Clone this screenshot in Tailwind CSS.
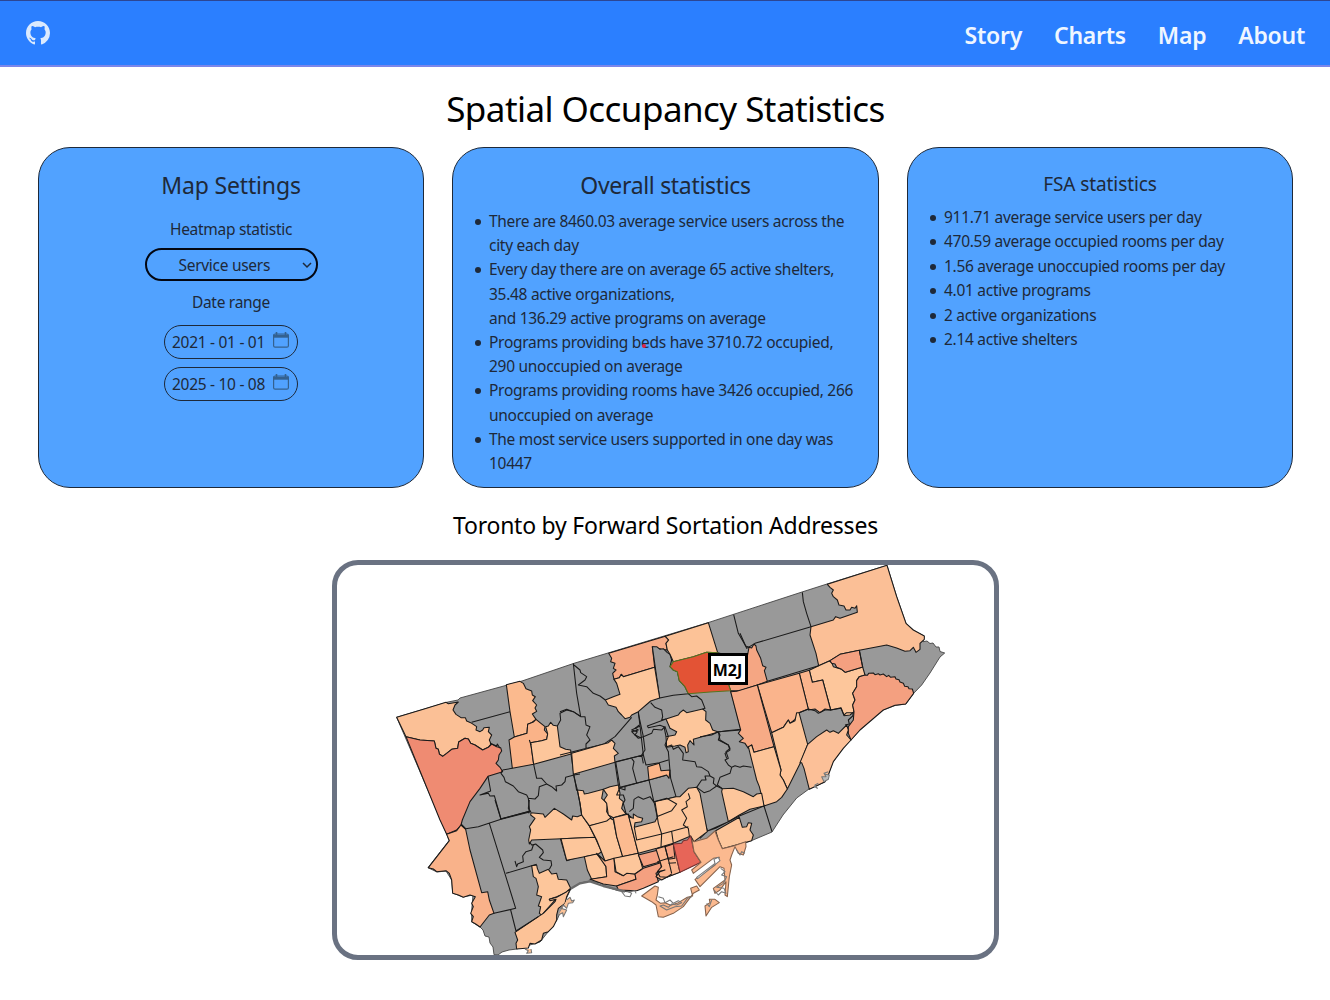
<!DOCTYPE html>
<html lang="en">
<head>
<meta charset="utf-8">
<title>Spatial Occupancy Statistics</title>
<script src="https://cdn.jsdelivr.net/npm/@tailwindcss/browser@4"></script>
</head>
<body class="h-[1000px] overflow-hidden bg-white font-['Noto_Sans',sans-serif] text-black">
<header class="flex h-[67px] items-center justify-between border-t border-b-2 border-t-[#2c4694] border-b-[#7b86ea] bg-[#2b7fff] px-[25px]">
  <svg class="ml-px size-[24px]" viewBox="0 0 16 16" fill="#dbeafe"><path d="M8 0C3.58 0 0 3.58 0 8c0 3.54 2.29 6.53 5.47 7.59.4.07.55-.17.55-.38 0-.19-.01-.82-.01-1.49-2.01.37-2.53-.49-2.69-.94-.09-.23-.48-.94-.82-1.13-.28-.15-.68-.52-.01-.53.63-.01 1.08.58 1.23.82.72 1.21 1.87.87 2.33.66.07-.52.28-.87.51-1.07-1.78-.2-3.64-.89-3.64-3.95 0-.87.31-1.59.82-2.15-.08-.2-.36-1.02.08-2.12 0 0 .67-.21 2.2.82.64-.18 1.32-.27 2-.27s1.36.09 2 .27c1.53-1.04 2.2-.82 2.2-.82.44 1.1.16 1.92.08 2.12.51.56.82 1.27.82 2.15 0 3.07-1.87 3.75-3.65 3.95.29.25.54.73.54 1.48 0 1.07-.01 1.93-.01 2.2 0 .21.15.46.55.38A8.01 8.01 0 0 0 16 8c0-4.42-3.58-8-8-8"/></svg>
  <nav class="flex gap-8 pt-[3px] text-[23px] leading-8 font-semibold tracking-[-0.27px] text-[#eff6ff]">
    <a>Story</a><a>Charts</a><a>Map</a><a>About</a>
  </nav>
</header>
<main>
  <h1 class="mt-[22px] h-10 pl-px text-center text-[35px] leading-10 tracking-[-0.55px]">Spatial Occupancy Statistics</h1>
  <section class="mr-[37px] ml-[38px] mt-[18px] flex h-[341px] justify-between text-[15.5px] leading-[24.3px] tracking-[-0.29px] text-[#1e2939]">
    <div class="flex w-[386px] flex-col items-center rounded-[32px] border border-[#1e2939] bg-[#51a2ff]">
      <h2 class="mt-[21px] text-[23px] leading-8 tracking-[-0.15px]">Map Settings</h2>
      <label class="mt-[16px]">Heatmap statistic</label>
      <div class="mt-[7px] flex h-[33px] w-[173px] items-center rounded-full border-2 border-[#030712] pr-[4px] pl-[32px]">
        <span class="grow">Service users</span>
        <svg class="size-[10px]" viewBox="0 0 10 10" fill="none" stroke="#1e2939" stroke-width="1.5"><path d="M1 3l4 4 4-4"/></svg>
      </div>
      <label class="mt-[9px]">Date range</label>
      <div class="mt-[10px] flex h-[34px] w-[134px] items-center justify-between rounded-full border border-[#1e2939] px-[7px]">
        <span class="pt-0.5">2021 - 01 - 01</span>
        <svg class="mr-px mb-1 size-4" viewBox="0 0 16 16" fill="none" stroke="#34618f"><rect x=".6" y="2" width="14.8" height="13.2" rx="1.5" stroke-width="1.2"/><path d="M.6 4.2h14.8" stroke-width="3"/><path d="M3.5 0v3M12.5 0v3" stroke-width="1.6"/></svg>
      </div>
      <div class="mt-2 flex h-[34px] w-[134px] items-center justify-between rounded-full border border-[#1e2939] px-[7px]">
        <span class="pt-0.5">2025 - 10 - 08</span>
        <svg class="mr-px mb-1 size-4" viewBox="0 0 16 16" fill="none" stroke="#34618f"><rect x=".6" y="2" width="14.8" height="13.2" rx="1.5" stroke-width="1.2"/><path d="M.6 4.2h14.8" stroke-width="3"/><path d="M3.5 0v3M12.5 0v3" stroke-width="1.6"/></svg>
      </div>
    </div>
    <div class="relative w-[427px] rounded-[32px] border border-[#1e2939] bg-[#51a2ff]">
      <h2 class="mt-[21px] text-center text-[23px] leading-8 tracking-[-0.32px]">Overall statistics</h2>
      <ul class="mt-[8px] pl-[36px] leading-[24.2px] whitespace-nowrap *:relative *:before:absolute *:before:top-[10px] *:before:-left-[14px] *:before:size-[6px] *:before:rounded-full *:before:bg-[#1e2939] *:before:content-['']">
        <li>There are 8460.03 average service users across the<br>city each day</li>
        <li>Every day there are on average 65 active shelters,<br>35.48 active organizations,<br>and 136.29 active programs on average</li>
        <li>Programs providing beds have 3710.72 occupied,<br>290 unoccupied on average</li>
        <li>Programs providing rooms have 3426 occupied, 266<br>unoccupied on average</li>
        <li>The most service users supported in one day was<br>10447</li>
      </ul>
      <span class="absolute top-[196px] left-[189px] size-1 rounded-full bg-[#e0254a]"></span>
    </div>
    <div class="w-[386px] rounded-[32px] border border-[#1e2939] bg-[#51a2ff]">
      <h2 class="mt-[22px] text-center text-[19px] leading-7 tracking-[-0.1px]">FSA statistics</h2>
      <ul class="mt-[7px] pl-[36px] leading-[24.4px] whitespace-nowrap *:relative *:before:absolute *:before:top-[10px] *:before:-left-[14px] *:before:size-[6px] *:before:rounded-full *:before:bg-[#1e2939] *:before:content-['']">
        <li>911.71 average service users per day</li>
        <li>470.59 average occupied rooms per day</li>
        <li>1.56 average unoccupied rooms per day</li>
        <li>4.01 active programs</li>
        <li>2 active organizations</li>
        <li>2.14 active shelters</li>
      </ul>
    </div>
  </section>
  <h2 class="mt-[21px] mb-[19px] pl-px text-center text-[23px] leading-8 tracking-[-0.24px]">Toronto by Forward Sortation Addresses</h2>
  <div class="relative mx-auto h-[400px] w-[667px] overflow-hidden rounded-[26px] border-5 border-[#6a7282]">
    <svg class="block h-[390px] w-[657px]" viewBox="337 565 657 390" fill="none" stroke="#1a1a1a" stroke-width="3.2" stroke-linejoin="round">
      <path fill="#999" stroke="#444" stroke-width=".9" d="M396.7 717.3L448 702L458 700L460 698L522 681L574 663.3L708 622.7L802 592L827 584L887 565.3L896.7 596.7L906 623.3L913 630L924 636L923 641.7L927 641L930 643.5L933 643L936 647L939 647L940 651.5L944.7 653L940 657L930 673L921.7 685L913 694L906 704L895 705.5L883 710L873 718L860 730L851 740L843 748L833 762L828 775L825 782L818 785L809 789L796.7 798L783 815L772 832L753 840L745 843L720 846L701 862L680 872L655 882L643 886L630 892L618 890.7L607 887L600 883L590 881L580 883L571 888.5L567 897L557 920L548 932L540 942L530 945L516.7 949L509 950L502 952L498 955L494 954.7L493 947L490 943L489 937L485 936L483 930L480 927L471.7 921.7L471.7 910L473 895L463 897L452.7 893L451.7 880L446 871L437 872L428 867.7L449 840.7L446.7 834Z"/>
      <!-- north-west -->
      <g transform="translate(380 680) scale(.33333)">
        <path fill="#fbc096" d="M50 112L130 88L198 67L205 71L235 66L225 75L219 90L228 103L243 113L256 113L260 123L272 128L290 140L288 150L300 155L308 150L312 143L328 142L325 155L335 165L328 180L333 192L325 202L308 210L285 195L272 190L265 177L255 175L236 186L233 205L215 208L200 220L188 229L178 222L175 208L168 205L163 183L120 180L78 170Z"/>
        <path fill="#ef8b72" d="M78 170L120 180L163 183L168 205L175 208L178 222L188 229L200 220L215 208L233 205L236 186L255 175L265 177L272 190L285 195L308 210L325 202L335 192L350 200L362 203L365 213L357 225L355 240L348 250L360 262L368 275L324 289L300 325L270 365L247 420L243 435L230 450L200 463L180 420Z"/>
        <path fill="#fbba8e" d="M379 14L420 4L430 10L438 26L455 33L457 45L466 50L458 62L470 75L465 84L470 94L457 102L468 118L455 128L443 133L441 160L403 171L390 95Z"/>
        <path fill="#fab388" d="M403 171L441 160L443 133L460 126L468 118L480 128L495 140L493 150L503 162L500 178L485 182L452 188L461 253L397 265L387 180Z"/>
        <path fill="#fdc69b" d="M452 188L485 182L500 178L503 162L497 140L505 138L512 127L520 136L532 138L540 200L557 208L572 210L573 222L461 253Z"/>
        <path d="M390 95L275 127M330 190L350 198L352 192L360 205M397 265L368 270M573 222L600 214M461 253L470 295L485 295L500 312L515 320L530 333L528 318L545 315L555 305L557 292L582 285L600 282M573 222L582 285L590 332M324 289L332 333L300 345L325 340L330 348L343 347L363 417L450 393M368 270L363 280L372 292L376 305L400 318L415 335L440 345L445 355L448 385L446 400M445 355L465 357L475 347L478 320L500 312M532 138L542 120L540 100L560 90L580 95L600 108"/>
      </g>
      <!-- north-centre -->
      <g transform="translate(560 620) scale(.33333)">
        <path fill="#f7ab86" d="M146 100L316 49L326 60L318 70L322 90L305 88L277 80L284 142L190 170L184 163L178 173L162 178L158 160L168 150L160 145L165 130L152 125L155 115Z"/>
        <path fill="#999" d="M277 80L290 80L300 88L310 86L322 98L330 103L335 120L330 140L340 150L352 155L358 182L375 200L385 221L340 226L299 234Z"/>
        <path fill="#fcc297" d="M316 49L445 8L473 98L440 97L400 110L340 125L330 103L322 90L318 70L326 60Z"/>
        <path fill="#fdc69b" d="M162 178L178 173L184 163L190 170L284 142L299 234L272 243L235 275L215 285L210 292L195 296L185 285L175 275L168 262L145 255L136 240L160 230L180 223L170 190Z"/>
        <path fill="#f5a683" d="M473 98L560 120L567 82L575 84L582 72L588 78L590 90L602 115L608 137L618 142L613 152L622 184L592 195L540 212L512 212Z"/>
        <path fill="#e35335" stroke="#55751f" d="M340 125L400 110L440 97L473 98L490 150L512 212L450 216L385 221L375 200L358 182L352 155L340 150L330 140Z"/>
        <path fill="#fdc69b" d="M318 297L355 285L360 278L370 270L380 278L428 267L438 275L437 300L450 310L458 330L475 336L400 358L402 375L390 362L383 375L385 395L378 398L375 382L360 375L345 378L320 382L318 350L345 345L350 335L330 325Z"/>
        <path d="M40 130L50 220L62 290L75 290L78 315L90 320L80 345L90 360L78 372L78 385M42 135L60 150L62 158L80 170L75 180L55 195L80 200L100 220L120 228L136 240M521 -16L535 40L557 78L567 82M0 275L20 268L40 275L62 290M0 405L80 385L130 373L165 350L215 292M385 221L395 230L410 228L425 240L435 265L428 267M475 336L500 332L543 328L512 212M475 336L480 345L475 360L505 375L510 390L495 400L500 415M272 248L285 262L305 270L308 290L305 300L318 297M235 275L240 318L215 330L232 335L225 345L245 355M240 318L250 405M318 297L262 318L265 323L300 316L312 320L318 350"/>
      </g>
      <!-- north-east -->
      <g transform="translate(740 560) scale(.33333)">
        <path fill="#fbbf96" d="M262 73L441 16L470 110L498 190L520 210L553 228L553 238L540 250L540 268L528 277L520 262L510 272L495 274L470 264L440 255L358 271L300 283L270 302L236 317L228 280L210 225L213 200L280 180L287 170L300 175L352 157L350 137L345 145L335 142L330 150L318 150L312 138L297 135L292 120L280 110L275 100L280 90L270 82Z"/>
        <path fill="#fdc69b" d="M208 331L236 317L268 303L275 308L280 320L305 328L316 337L368 321L375 345L358 350L350 362L350 380L338 400L345 420L338 435L342 455L330 465L312 467L303 443L272 450L248 360L217 367Z"/>
        <path fill="#f4a080" d="M270 302L300 283L358 271L368 321L316 337L305 328L290 322L285 312L275 310Z"/>
        <path fill="#f4a080" d="M375 345L382 346L386 340L400 339L405 344L415 341L420 345L430 342L440 350L446 346L452 352L465 350L468 357L477 359L480 366L490 370L494 379L504 380L507 386L517 387L521 400L497 432L465 436L430 450L395 480L360 510L333 540L325 520L325 500L340 480L342 455L338 435L345 420L338 400L350 380L350 362L358 350Z"/>
        <path fill="#fab48c" d="M178 340L208 331L217 367L248 360L272 450L255 447L240 458L225 447L205 450Z"/>
        <path d="M187 97L190 125L200 160L213 200L45 250L20 265L0 220M82 364L236 317M358 271L368 321"/>
      </g>
      <!-- east -->
      <g transform="translate(700 680) scale(.33333)">
        <path fill="#fab48c" d="M172 15L298 -20L325 87L297 98L285 118L270 130L265 120L250 142L215 158Z"/>
        <path fill="#f7ab86" d="M92 35L110 34L172 15L222 200L162 217L155 195L145 205L135 190L118 185L130 175L115 160L122 150Z"/>
        <path fill="#fdc498" d="M215 158L250 142L265 120L270 130L285 122L290 98L297 98L323 193L303 245L262 327L250 300L240 285L243 270Z"/>
        <path fill="#fdc498" d="M145 200L155 195L162 217L222 200L243 270L240 285L250 300L262 327L245 352L230 365L192 378L178 320L170 300Z"/>
        <path fill="#fcc098" d="M323 193L350 170L380 150L390 157L400 152L415 160L440 135L445 150L440 165L453 180L430 205L400 245L385 285L375 305L355 315L328 328L312 265L305 248L300 248Z"/>
        <path fill="#fdc69b" d="M65 335L67 326L100 325L130 335L160 350L170 342L185 340L192 378L150 388L118 405L85 425Z"/>
        <path d="M297 98L325 87L345 92L355 100L375 90L392 90L423 85L432 105L440 98L460 98L458 108L445 120L448 132L435 135M192 378L216 455M0 170L35 165L55 155L122 150M55 155L60 180L85 195L90 205L78 215L85 235L75 240L85 255L95 262L90 280L60 292L52 315L67 326M95 262L105 257L120 262L130 258L155 262M85 425L22 453L0 370M192 378L118 408L47 445L22 453L0 475"/>
        <path stroke="#777" fill="#bbb" d="M385 275L372 280L378 290L365 290L372 305L385 298L388 285L375 283M355 310L345 315L352 325L342 318"/>
      </g>
      <!-- south-west -->
      <g transform="translate(420 800) scale(.33333)">
        <path fill="#f9b28a" d="M123 75L137 88L150 150L185 278L203 275L208 300L222 340L208 345L180 381L167 372L155 365L160 350L152 340L160 320L155 310L166 290L150 285L130 292L115 285L98 280L95 240L88 220L78 212L50 215L40 207L25 203L88 122L80 103L110 92Z"/>
        <path fill="#fdc69b" d="M335 197L350 195L352 205L358 220L385 208L395 222L410 220L415 238L440 240L452 265L435 280L410 290L388 298L405 300L365 345L358 340L362 320L355 318L365 290L350 285L355 260L348 235L340 230Z"/>
        <path fill="#fcc297" d="M355 350L370 340L405 305L408 298L390 302L388 298L410 292L440 275L452 265L440 290L435 310L415 325L410 345L410 360L400 380L385 395L370 400L365 420L345 432L330 430L325 444L290 447L288 430L293 420L285 397Z"/>
        <path d="M123 72L137 86L175 80L243 58L332 35L325 25L328 0M208 70L287 325L222 340M258 220L350 193M272 330L288 393L355 350M225 0L243 58M285 183L290 200L293 192L310 185L308 168L318 155L335 150L340 135L347 132L368 150L370 158L358 172L370 180L393 182L395 195L388 208M328 125L335 135L347 132M421 115L440 182L495 165"/>
        <path fill="#fcc297" stroke="#777" d="M440 300L450 292L455 303L463 300L458 308L445 310L440 325L430 315L422 325L440 330L430 350L428 338L415 345M315 447L325 452L320 460L335 458L333 447"/>
      </g>
      <!-- midtown -->
      <g transform="translate(500 740) scale(.33333)">
        <path fill="#fdc69b" d="M215 40L300 15L325 8L335 0L345 10L340 25L355 40L343 48L345 67L220 103Z"/>
        <path fill="#fdc69b" d="M93 218L130 222L135 232L163 205L190 222L215 240L218 228L232 230L245 225L268 258L285 292L185 296L95 300L88 312L86 300L92 270L88 260L105 235L92 225Z"/>
        <path fill="#fdc69b" d="M183 296L285 292L305 335L295 342L200 361Z"/>
        <path fill="#fdc69b" d="M232 150L250 152L253 162L265 160L310 148L305 175L322 190L320 215L335 238L320 245L268 257L245 225L240 190Z"/>
        <path fill="#fdc69b" d="M310 148L330 140L355 135L360 160L358 175L370 185L365 205L378 222L340 233L325 225L320 190L312 180L322 165Z"/>
        <path fill="#fdc69b" d="M268 257L320 243L330 235L340 240L350 290L368 350L315 363L290 300Z"/>
        <path fill="#fcbb90" d="M340 233L385 222L415 340L368 350L350 290Z"/>
        <path fill="#fdc69b" d="M253 350L290 342L305 355L318 380L320 410L275 418L262 390Z"/>
        <path fill="#fab48c" d="M315 363L342 355L345 395L370 407L380 400L405 402L408 418L350 438L310 432L270 418L320 410L318 380L290 340Z"/>
        <path fill="#fdc69b" d="M342 355L415 340L428 385L405 402L380 400L370 407L348 395Z"/>
        <path fill="#f4a080" d="M415 345L475 330L482 365L430 380Z"/>
        <path fill="#f4a080" d="M430 385L482 368L485 390L468 400L475 425L430 445L410 452L355 450L350 438L408 418L405 402Z"/>
        <path d="M220 103L232 150L240 190L245 225M345 67L355 135M345 67L430 45M395 55L402 65L398 85L410 130L355 145M410 130L510 103M375 140L375 150L360 145M0 237L90 214M88 0L93 15"/>
        <path stroke="#6b6b6b" stroke-width="7" d="M212 446L240 430L270 424L310 438L350 448L375 455"/>
      </g>
      <!-- downtown north -->
      <g transform="translate(600 700) scale(.33333)">
        <path fill="#fdb588" d="M143 200L178 190L183 212L210 210L207 235L200 225L147 240Z"/>
        <path d="M47 185L60 262M60 262L147 240L162 307L228 290L212 235L205 155M130 165L138 195L178 188L205 180M200 140L215 135L220 148L235 140L250 160L248 180L285 185L290 200L305 202L325 215L330 228L315 228L318 240L305 240L290 262L312 278L330 272L350 258L340 250L342 235L330 228M130 110L155 100L160 88L185 90L195 80L205 110L195 135L205 155M130 110L115 115L95 95L115 90L105 85L118 75M115 40L130 110L135 150L125 165L130 190M130 165L47 185M60 262L50 285L70 285L75 300L70 310L78 340L95 352M102 298L100 325L88 335M102 298L115 290L130 298L150 290L162 307M350 258L367 266"/>
      </g>
      <!-- downtown, waterfront and islands -->
      <g transform="translate(600 800) scale(.33333)">
        <path fill="#fdc69b" d="M162 5L200 -3L228 -10L240 -10L265 -35L290 -38L300 -20L322 95L282 125L272 108L220 130L170 145L115 160L85 45L90 52L100 55L100 42L112 50L128 55L125 65L105 68L103 82L165 65L172 52Z"/>
        <path fill="#fdc69b" d="M347 92L418 52L427 82L440 80L445 68L455 70L450 90L460 105L455 122L367 146L355 120Z"/>
        <path fill="#fab48c" d="M168 147L220 132L240 217L200 232L185 240L168 230L180 215L195 210L172 215L185 200Z"/>
        <path fill="#f4a080" d="M195 140L220 132L225 175L205 178Z"/>
        <path fill="#e76558" stroke="#733" d="M220 132L245 130L250 122L262 120L272 108L282 155L303 187L240 217Z"/>
        <path fill="#fbb98f" stroke="#86634d" d="M276 120L282 125L320 115L345 93L355 120L367 146L400 138L437 125L438 140L430 165L415 160L405 140L395 165L390 180L395 195L388 230L382 290L375 285L378 245L360 270L345 280L340 265L375 240L372 205L360 200L300 260L285 238L345 195L358 172L340 175L280 220L275 210L303 187L282 155Z"/>
        <path fill="#fff" stroke="#777" d="M290 232L345 190L342 178L355 172L360 182L350 190L293 236Z"/>
        <path fill="#fbb98f" stroke="#86634d" d="M315 318L330 308L328 298L345 298L358 308L335 322L318 348ZM125 288L165 258L175 262L172 285L168 300L182 310L195 308L212 316L235 308L262 292L278 288L272 265L290 258L298 270L280 280L250 320L220 340L190 352L175 350L168 315L155 305Z"/>
        <path stroke="#777" d="M175 290L190 295L195 308L210 300L220 310L235 302L245 308L230 315L215 312L205 322L190 315L180 318L200 330L225 320L245 318L262 295L275 290M410 150L420 165L425 155L435 160M362 205L375 215L365 225L380 230L370 250L350 262L372 265L378 280L365 275L355 285L342 270M320 310L328 320L335 300M65 275L75 288L90 290L95 280L85 275L105 272L108 280"/>
        <path d="M103 82L110 120L185 102L265 80M165 5L175 70L185 102L183 140M162 5L200 -5L230 12L215 32L170 50M265 -20L270 -5L258 5L262 20L245 30L260 55L250 75L265 85L268 108M215 95L220 130M172 185L220 170M195 140L205 178L215 220M205 190L228 188M172 215L180 230L200 232L215 222"/>
      </g>
    </svg>
    <div class="absolute top-[88px] left-[371px] flex h-8 w-10 items-center justify-center border-3 border-black bg-white pt-0.5 text-[16px] leading-none font-bold">M2J</div>
  </div>
</main>
</body>
</html>
